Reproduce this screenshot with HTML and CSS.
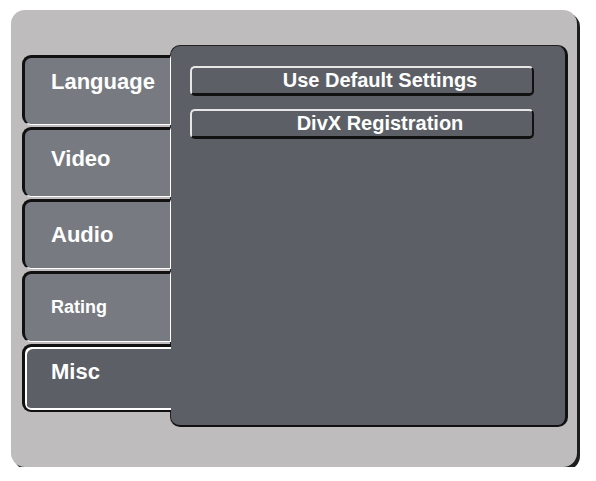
FILE: index.html
```html
<!DOCTYPE html>
<html lang="en">
<head>
  <meta charset="UTF-8">
  <title>Setup - Misc</title>
  <link rel="stylesheet" href="styles.css">
</head>
<body>

  <div class="frame">
    <div class="tabs">
      <div class="tab tab-language">Language</div>
      <div class="tab tab-video">Video</div>
      <div class="tab">Audio</div>
      <div class="tab tab-small">Rating</div>
      <div class="tab tab-active">Misc</div>
    </div>

    <div class="panel">
      <div class="option">Use Default Settings</div>
      <div class="option">DivX Registration</div>
    </div>
  </div>

</body>
</html>
```

FILE: styles.css
```css
body {
  margin: 0;
  background: #fff;
  font-family: 'Liberation Sans', Arial, sans-serif;
}

.frame {
  margin: 10px 0 0 11px;
  width: 566px;
  height: 457px;
  box-sizing: border-box;
  padding: 35px 0 0 11px;
  background: #bebcbc;
  border-radius: 14px;
  box-shadow: 3px 3px 0 #1e1e1e;
  display: flex;
  align-items: flex-start;
}

.tabs {
  margin-top: 10px;
  margin-right: -1px;
  width: 149px;
  display: flex;
  flex-direction: column;
  gap: 2px;
  position: relative;
  z-index: 1;
}

.tab {
  height: 70px;
  box-sizing: border-box;
  padding-left: 26px;
  display: flex;
  align-items: center;
  background: #787a81;
  border-top: 3px solid #111;
  border-left: 3px solid #111;
  border-bottom: 1px solid #fff;
  border-right: 1px solid #fff;
  border-radius: 9px 0 0 9px;
  color: #fff;
  font-weight: bold;
  font-size: 22px;
}

.tab-language {
  padding-bottom: 18px;
}

.tab-video {
  padding-bottom: 8px;
}

.tab-small {
  height: 71px;
  font-size: 18px;
}

.tab-active {
  height: 68px;
  padding-bottom: 14px;
  background: #5d5f66;
  border-top: 3px solid #111;
  border-left: 3px solid #111;
  border-right: none;
  border-bottom: 2px solid #111;
  box-shadow: inset 2px 2px 0 #fff, inset 0 -2px 0 #fff;
}

.panel {
  width: 398px;
  height: 382px;
  box-sizing: border-box;
  padding: 20px 31px 0 19px;
  background: #5d5f66;
  border-top: 1px solid #222;
  border-left: 1px solid #222;
  border-right: 3px solid #111;
  border-bottom: 2px solid #111;
  border-radius: 10px;
  display: flex;
  flex-direction: column;
  gap: 13px;
}

.option {
  height: 30px;
  box-sizing: border-box;
  padding-left: 36px;
  display: flex;
  align-items: center;
  justify-content: center;
  border-top: 2px solid #e6e6e6;
  border-left: 2px solid #e6e6e6;
  border-right: 2px solid #111;
  border-bottom: 3px solid #111;
  border-radius: 5px;
  color: #fff;
  font-weight: bold;
  font-size: 20px;
}
```
